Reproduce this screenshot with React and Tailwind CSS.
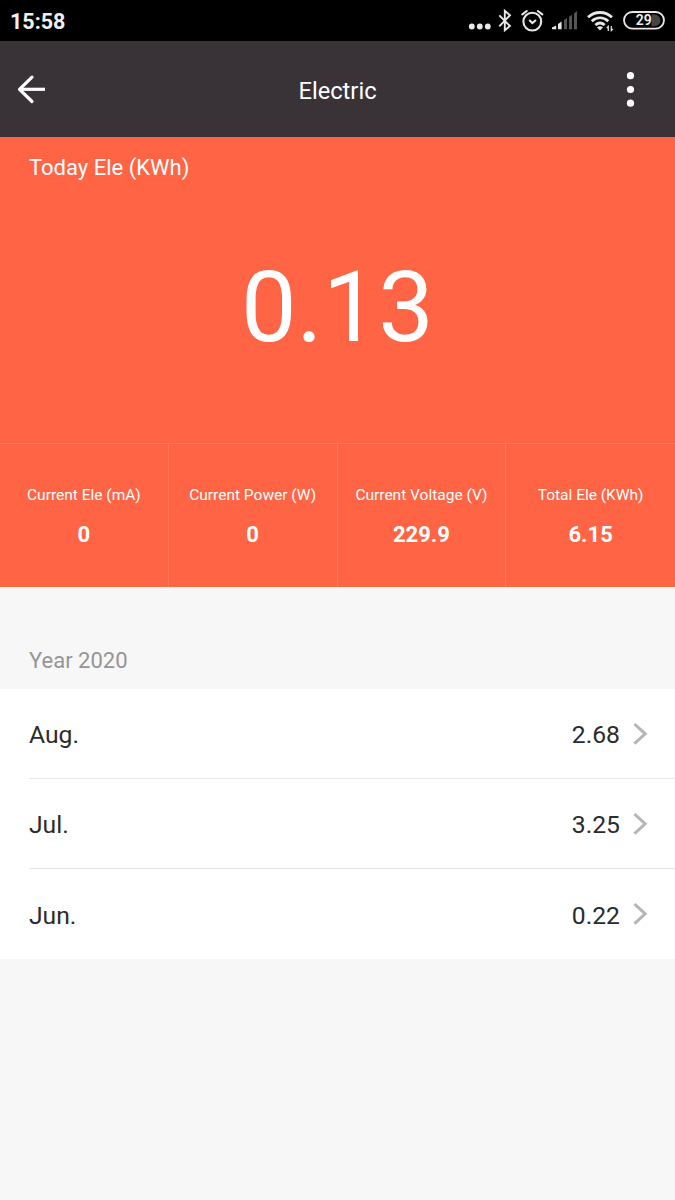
const stats = [
  { label: 'Current Ele (mA)', value: '0' },
  { label: 'Current Power (W)', value: '0' },
  { label: 'Current Voltage (V)', value: '229.9' },
  { label: 'Total Ele (KWh)', value: '6.15' },
];

const months = [
  { name: 'Aug.', value: '2.68' },
  { name: 'Jul.', value: '3.25' },
  { name: 'Jun.', value: '0.22' },
];

function StatusIcons() {
  return (
    <svg width="207" height="41" viewBox="468 0 207 41" fill="none" className="shrink-0">
      <g fill="#e8e8e8">
        <circle cx="471.8" cy="26.5" r="2.9" />
        <circle cx="479.8" cy="26.5" r="2.9" />
        <circle cx="487.8" cy="26.5" r="2.9" />
      </g>
      <path d="M499.3 15.3L510 26L504.8 30.2V10.8L510 15.2L499.3 26.3" stroke="#e8e8e8" strokeWidth="1.9" />
      <g stroke="#e8e8e8" strokeWidth="2.1" strokeLinecap="round">
        <circle cx="532.3" cy="21.6" r="8.9" />
        <path d="M522.3 14.3L526.8 11M537.8 11L542.3 14.3" />
        <path d="M529.2 20L532.4 23L536 20" strokeLinecap="butt" />
      </g>
      <path d="M552 29.3V27.5L556.2 25.6V29.3ZM558 29.3V24L561.6 21.5V29.3Z" fill="#e8e8e8" />
      <path d="M564 29.3V20L567 18V29.3ZM569 29.3V17L572 14.7V29.3ZM574 29.3V13.5L577 11V29.3Z" fill="#555" />
      <g stroke="#e8e8e8" strokeWidth="2.8">
        <path d="M588 17.3C595 10.9 605 10.9 612 17.3" />
        <path d="M591.7 21.3C596.8 16.8 603.2 16.8 608.3 21.3" />
        <path d="M595.3 25C598.4 22.4 601.6 22.4 604.7 25" />
      </g>
      <path d="M596.9 27.2Q600 25.2 603.1 27.2L600 30.4Z" fill="#e8e8e8" />
      <path d="M608.3 31V26.5L606.8 28M611.3 26V30.5L612.8 29" stroke="#e8e8e8" strokeWidth="1.2" />
      <path d="M651.5 14.5H654.5A5.9 5.9 0 0 1 654.5 26.3H651.5Z" fill="#444" />
      <rect x="624" y="12" width="40" height="16.6" rx="8.3" stroke="#e8e8e8" strokeWidth="1.8" />
      <text x="643.8" y="25.4" textAnchor="middle" fill="#f0f0f0" className="font-[Roboto,sans-serif] text-[14px] font-semibold">29</text>
    </svg>
  );
}

export default function App() {
  return (
    <div className="flex h-[1200px] w-[675px] flex-col overflow-hidden bg-[#f7f7f7] font-[Roboto,sans-serif]">
      <div className="flex h-[41px] items-center justify-between bg-black pl-[10px]">
        <span className="pt-[3px] text-[21.5px] leading-none font-bold text-[#eee]">15:58</span>
        <StatusIcons />
      </div>

      <header className="flex h-24 items-center justify-between bg-[#393338] px-[17px] text-white">
        <button aria-label="Back" className="w-[56px]">
          <svg width="30" height="30" viewBox="0 0 30 30" fill="none" stroke="white" strokeWidth="3.2">
            <path d="M28 15.3H3" />
            <path d="M15 3.1L2.5 15.3L15 27.5" strokeLinecap="round" strokeLinejoin="round" />
          </svg>
        </button>
        <h1 className="pt-[5px] text-[23.7px] leading-none">Electric</h1>
        <button aria-label="More" className="flex w-[56px] justify-center">
          <svg width="10" height="38" viewBox="0 0 10 38" fill="white">
            <circle cx="5.5" cy="5.7" r="3.6" />
            <circle cx="5.5" cy="19.5" r="3.6" />
            <circle cx="5.5" cy="33.2" r="3.6" />
          </svg>
        </button>
      </header>

      <section className="flex h-[450px] flex-col bg-[#ff6445] text-white">
        <div className="flex h-[306px] flex-col">
          <p className="pt-[19px] pl-[29px] text-[22px] leading-[24px]">Today Ele (KWh)</p>
          <p className="pt-[77px] text-center text-[99px] leading-[100px]">0.13</p>
        </div>
        <div className="grid h-36 grid-cols-4 border-t border-[#ff7a55]">
          {stats.map((s) => (
            <div key={s.label} className="flex flex-col items-center border-r border-[#ff7a55] pt-[41px] last:border-r-0">
              <span className="text-[15.5px] leading-5 whitespace-nowrap">{s.label}</span>
              <span className="mt-[17px] text-[22px] leading-[26px] font-bold">{s.value}</span>
            </div>
          ))}
        </div>
      </section>

      <h2 className="flex h-[102px] items-end pb-[14px] pl-[29px] text-[22px] leading-[28px] text-[#959595]">Year 2020</h2>

      <ul className="bg-white pl-[29px] text-[#2b2b2b]">
        {months.map((m) => (
          <li key={m.name} className="flex h-[90px] items-center border-b border-[#e5e5e5] pr-[27px] text-[24.7px] leading-[38px] last:border-b-0">
            <span className="grow pt-[3px]">{m.name}</span>
            <span className="pt-[3px]">{m.value}</span>
            <svg width="16" height="26" viewBox="0 0 16 26" fill="none" stroke="#b5b5b5" strokeWidth="3" className="ml-[12px]">
              <path d="M2.5 3L13.2 12.8L2.5 22.6" />
            </svg>
          </li>
        ))}
      </ul>
    </div>
  );
}
